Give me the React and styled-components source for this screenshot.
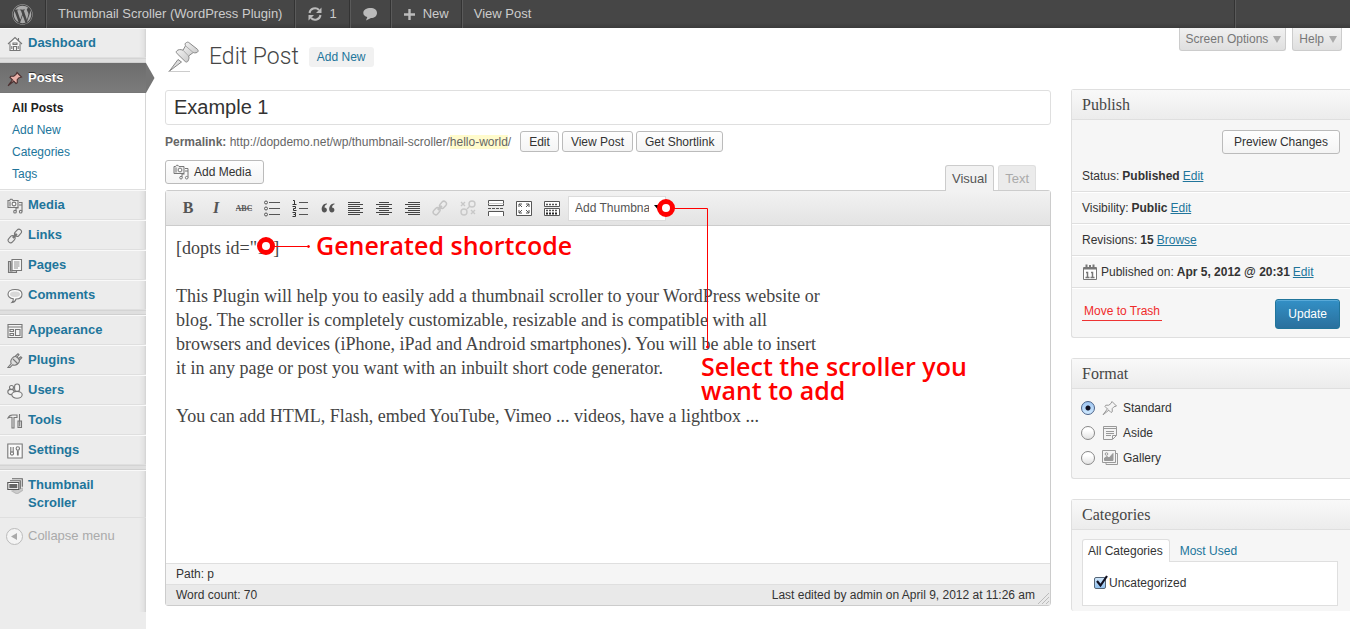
import React from "react";
import styled, { createGlobalStyle, css } from "styled-components";
import { FaWordpress } from "react-icons/fa";

const GlobalStyle = createGlobalStyle`
  *, *::before, *::after { box-sizing: border-box; }
  body { margin: 0; background: #fff; color: #333; font: 12px/18px "Liberation Sans", Arial, sans-serif; }
  button, input, select { font-family: inherit; margin: 0; }
  a { color: #21759b; text-decoration: none; }
  h1, h2, p, ul { margin: 0; padding: 0; }
  ul { list-style: none; }
  svg { display: block; flex: none; }
`;

/* ---------- admin bar ---------- */

const AdminBar = styled.header`
  display: flex;
  height: 28px;
  background: linear-gradient(#464646 0, #464646 23px, #3b3b3b 28px);
`;
const BarItem = styled.a`
  display: flex;
  align-items: center;
  gap: ${(p) => p.$gap || 0}px;
  padding: 0 12px;
  border-right: 1px solid #333;
  box-shadow: 1px 0 #5a5a5a;
  color: #ccc;
  font-size: 13px;
  line-height: 28px;
`;
const BarLast = styled(BarItem)`
  border: 0;
  box-shadow: none;
`;
const BarEnd = styled.div`
  width: 116px;
  margin-left: auto;
  border-left: 1px solid #333;
  box-shadow: inset 1px 0 #5a5a5a;
`;

/* ---------- side menu ---------- */

const Shell = styled.div`
  display: flex;
  min-height: calc(100vh - 28px);
`;
const Side = styled.nav`
  flex: none;
  width: 146px;
  display: flex;
  flex-direction: column;
  padding-bottom: 17px;
  background: #ececec;
`;
const Menu = styled.ul`
  flex: 1;
  position: relative;
  background: linear-gradient(to left, #d2d2d2 0, #e2e2e2 2px, #ececec 7px);
`;
const MenuLink = styled.a`
  position: relative;
  display: flex;
  gap: 5px;
  padding: 5px 10px 5px 7px;
  border-top: 1px solid #f9f9f9;
  border-bottom: 1px solid #dfdfdf;
  font-size: 13px;
  font-weight: bold;
  ${(p) =>
    p.$active &&
    css`
      color: #fff;
      background: linear-gradient(#6d6d6d, #7b7b7b);
      border-color: #6d6d6d #fff #777 #fff;
      border-left: 0;
      border-right: 0;
      text-shadow: 0 -1px 0 #333;
    `}
`;
const MenuIcon = styled.svg`
  width: 16px;
  height: 16px;
  margin-top: 2px;
  fill: none;
  stroke: #777;
  stroke-width: 1.1;
`;
const ActiveArrow = styled.svg`
  position: absolute;
  left: 100%;
  top: -1px;
`;
const Separator = styled.li`
  height: 5px;
  background: #dfdfdf;
  border-top: 1px solid #d4d4d4;
  border-bottom: 1px solid #d0d0d0;
`;
const SubMenu = styled.ul`
  margin-right: 1px;
  padding: 4px 0 4px 12px;
  background: #fff;
  border-bottom: 1px solid #dfdfdf;
  line-height: 22px;
`;
const SubLink = styled.a`
  color: ${(p) => (p.$current ? "#222" : "#21759b")};
  font-weight: ${(p) => (p.$current ? "bold" : "normal")};
`;
const Collapse = styled.button`
  display: flex;
  align-items: center;
  gap: 5px;
  padding: 9px 6px;
  border: 0;
  background: none;
  color: #aaa;
  font-size: 13px;
  line-height: 18px;
`;

/* ---------- page ---------- */

const Page = styled.main`
  flex: 1;
  min-width: 0;
  padding: 0 0 18px 19px;
`;
const PageHead = styled.div`
  display: flex;
  justify-content: space-between;
  align-items: flex-start;
  height: 61px;
`;
const Heading = styled.div`
  display: flex;
  align-items: center;
  padding-top: 11px;
`;
const Title = styled.h1`
  margin: 0 10px 0 8px;
  font: 300 23px/34px Roboto, "Liberation Sans", sans-serif;
  color: #464646;
`;
const AddNew = styled.a`
  padding: 1px 8px;
  border-radius: 3px;
  background: #f1f1f1;
`;
const ScreenTabs = styled.div`
  display: flex;
  gap: 6px;
  padding-right: 8px;
`;
const ScreenTab = styled.button`
  display: flex;
  align-items: center;
  gap: 5px;
  height: 23px;
  padding: 0 4px 0 6px;
  border: 1px solid #ccc;
  border-top: 0;
  border-radius: 0 0 3px 3px;
  background: linear-gradient(#f1f1f1, #dfdfdf);
  color: #777;
  font-size: 12px;
`;
const Columns = styled.div`
  display: flex;
  gap: 20px;
  align-items: flex-start;
`;
const PostColumn = styled.div`
  flex: 1;
  min-width: 0;
`;
const TitleInput = styled.input`
  display: block;
  width: 100%;
  height: 35px;
  margin-top: 1px;
  padding: 0 8px;
  border: 1px solid #dfdfdf;
  border-radius: 3px;
  color: #333;
  font-size: 20px;
`;
const Permalink = styled.div`
  display: flex;
  align-items: center;
  gap: 3px;
  margin: 6px 0 8px;
  color: #666;
  mark { background: #fffbcc; color: inherit; }
  span { padding-right: 6px; }
`;
const Button = styled.button`
  display: flex;
  align-items: center;
  gap: 5px;
  height: ${(p) => (p.$small ? 21 : 24)}px;
  padding: 0 ${(p) => p.$pad || 8}px;
  border: 1px solid #bbb;
  border-radius: 3px;
  background: linear-gradient(#fefefe, #f4f4f4);
  color: #333;
  font-size: 12px;
  white-space: nowrap;
`;
const MediaButton = styled(Button)`
  min-width: 99px;
`;
const EditorHead = styled.div`
  display: flex;
  justify-content: space-between;
  align-items: flex-start;
  height: 30px;
  padding-right: 15px;
`;
const EditorTabs = styled.div`
  display: flex;
  gap: 4px;
  padding-top: 5px;
`;
const EditorTab = styled.button`
  position: relative;
  z-index: 1;
  height: ${(p) => (p.$active ? 26 : 25)}px;
  padding: 0 6px;
  border: 1px solid ${(p) => (p.$active ? "#ccc" : "#dfdfdf")};
  border-bottom: 0;
  border-radius: 3px 3px 0 0;
  background: ${(p) => (p.$active ? "#f2f2f2" : "#ebebeb")};
  color: ${(p) => (p.$active ? "#555" : "#aaa")};
  font-size: 13px;
`;
const Editor = styled.section`
  position: relative;
  border: 1px solid #ccc;
  border-radius: 3px;
`;
const Toolbar = styled.div`
  display: flex;
  align-items: center;
  gap: 8px;
  height: 35px;
  padding-left: 12px;
  border-bottom: 1px solid #ccc;
  background: linear-gradient(#f2f2f2, #e3e3e3);
`;
const Tool = styled.button`
  display: flex;
  align-items: center;
  justify-content: center;
  width: 20px;
  height: 20px;
  padding: 0;
  border: 0;
  background: none;
  svg { width: 18px; height: 18px; fill: none; stroke: #555; }
`;
const SelectWrap = styled.div`
  display: flex;
  align-items: center;
  width: 98px;
  height: 25px;
  margin-left: -2px;
  padding-left: 6px;
  border: 1px solid #dcdcdc;
  background: #fff;
`;
const ToolSelect = styled.select`
  appearance: none;
  width: 74px;
  padding: 0;
  border: 0;
  background: none;
  color: #555;
  font-size: 12px;
`;
const Writing = styled.div`
  min-height: 337px;
  padding: 10px;
  color: #444;
  font: 18px/24px "Liberation Serif", "Times New Roman", serif;
  p { max-width: 650px; margin-bottom: 24px; }
`;
const StatusBar = styled.div`
  display: flex;
  justify-content: space-between;
  height: 21px;
  padding: 0 15px 0 10px;
  border-top: 1px solid #dfdfdf;
  background: ${(p) => (p.$dark ? "#e9e9e9" : "#f5f5f5")};
  line-height: 20px;
  position: relative;
`;
const Grip = styled.svg`
  position: absolute;
  right: 0;
  bottom: 0;
`;
const Callout = styled.svg`
  position: absolute;
  left: 0;
  top: 0;
  pointer-events: none;
`;
const CalloutText = styled.div`
  position: absolute;
  left: ${(p) => p.$left}px;
  top: ${(p) => p.$top}px;
  max-width: 300px;
  color: #f00;
  font: 600 25px/24px "Open Sans", "Noto Sans", sans-serif;
`;

/* ---------- meta boxes ---------- */

const MetaColumn = styled.div`
  flex: none;
  width: 279px;
  display: flex;
  flex-direction: column;
  gap: 20px;
`;
const Box = styled.section`
  border: 1px solid #dfdfdf;
  border-right: 0;
  border-bottom-width: ${(p) => (p.$open ? 0 : 1)}px;
  border-radius: 3px 0 0 3px;
  background: #f6f6f6;
`;
const BoxTitle = styled.h2`
  height: 30px;
  padding: 0 10px;
  border-bottom: 1px solid #dfdfdf;
  background: linear-gradient(#f9f9f9, #ececec);
  color: #464646;
  font: 16px/29px "Liberation Serif", "Times New Roman", serif;
`;
const PreviewRow = styled.div`
  display: flex;
  justify-content: flex-end;
  padding: 10px 10px 6px;
`;
const MetaRow = styled.div`
  display: flex;
  align-items: center;
  gap: 3px;
  height: 32px;
  padding-left: 10px;
  border-bottom: 1px solid #dfdfdf;
  box-shadow: 0 1px #fff;
  a { text-decoration: underline; }
`;
const Actions = styled.div`
  display: flex;
  justify-content: space-between;
  align-items: center;
  padding: 11px 10px 8px;
`;
const Trash = styled.a`
  padding: 0 2px;
  margin-bottom: 4px;
  border-bottom: 1px solid #e33;
  color: #f02a2a;
  line-height: 17px;
`;
const Update = styled.button`
  height: 30px;
  padding: 0 12px;
  border: 1px solid #21759b;
  border-radius: 3px;
  background: linear-gradient(#3390c6, #2a709d);
  box-shadow: inset 0 1px #59aad8;
  color: #fff;
  font-size: 12px;
`;
const FormatList = styled.div`
  display: flex;
  flex-direction: column;
  gap: 7px;
  padding: 10px 9px 11px;
`;
const FormatOption = styled.label`
  display: flex;
  align-items: center;
  gap: 5px;
`;
const Radio = styled.input`
  appearance: none;
  width: 14px;
  height: 14px;
  margin-right: 2px;
  border: 1px solid #888;
  border-radius: 50%;
  background: linear-gradient(#fff 30%, #e2e2e2);
  &:checked {
    border-color: #4a6288;
    background: radial-gradient(circle, #112 0 2px, transparent 3px), linear-gradient(#9fc6f2, #cfe9ff);
  }
`;
const CatBody = styled.div`
  padding: 9px 12px 5px 10px;
`;
const CatTabs = styled.div`
  display: flex;
`;
const CatTab = styled.button`
  height: 23px;
  margin-bottom: -1px;
  padding: 0 6px 0 5px;
  border: 1px solid ${(p) => (p.$active ? "#dfdfdf" : "transparent")};
  border-bottom: 0;
  border-radius: 3px 3px 0 0;
  background: ${(p) => (p.$active ? "#fff" : "none")};
  color: ${(p) => (p.$active ? "#333" : "#21759b")};
  font-size: 12px;
  & + & { margin-left: 4px; }
`;
const CatPanel = styled.div`
  padding: 12px 11px 13px;
  border: 1px solid #dfdfdf;
  background: #fff;
`;
const CatLabel = styled.label`
  position: relative;
  display: flex;
  align-items: center;
  gap: 3px;
`;
const Check = styled.input`
  appearance: none;
  width: 12px;
  height: 12px;
  border: 1px solid #567;
  border-radius: 2px;
  background: linear-gradient(#cfe6fb, #8fc0ee);
`;
const CheckMark = styled.svg`
  position: absolute;
  left: 1px;
  top: 0;
  pointer-events: none;
`;

/* ---------- drawings ---------- */

const mediaShape = (
  <>
    <path d="M1 2.500h1.500l1-1.200h1.500l1 1.200h5v7h-10zM3 3.500v5" fill="#eee" />
    <circle cx="7" cy="6" r="1.900" fill="#fff" />
    <path d="M12 4.500h3v9M12 7h3M9 13.500v-3.500h2.500" />
    <circle cx="8" cy="13.700" r="1.300" fill="#fff" />
    <circle cx="13.700" cy="13.700" r="1.300" fill="#fff" />
  </>
);
const chainShape = (
  <>
    <rect x="-3.900" y="-2.500" width="7.800" height="5" rx="2.500" transform="translate(11 4.800) rotate(-48)" />
    <rect x="-3.900" y="-2.500" width="7.800" height="5" rx="2.500" transform="translate(4.600 11.200) rotate(-48)" />
    <path d="M5.800 9.900l4-4" strokeWidth="2.400" />
  </>
);
const pinShape = (
  <>
    <path d="M10 1.500l4.500 4.500-1.500.5-1 .2-1.800 2 .1 3-1.300.8-6-6 .8-1.300h3l2.200-1.800z" />
    <path d="M5.600 8.600L1 14.800l6-4.800" />
  </>
);
const shapes = {
  home: (
    <>
      <path d="M1 8l7-6.500L15 8M3 7.500v7h10v-7" fill="#f8f8f8" />
      <path d="M6.500 14.500v-4h3v4M6 7h4v1.500H6zM11.500 2v3M4.800 10v3M11.200 10v3" />
    </>
  ),
  media: mediaShape,
  links: chainShape,
  pages: (
    <>
      <path d="M3.500 3.500h-2v11h8v-2M1.500 5v9M3.500 3v10h2" fill="#ccc" />
      <path d="M5 1.500h9.500v11H5z" fill="#fafafa" />
      <path d="M7 4h5.500M7 6h5.500M7 8h5.500M7 10h4" strokeWidth=".8" />
    </>
  ),
  comments: (
    <>
      <path d="M8 1.500c4 0 7 1.800 7 4.700s-2.500 4.700-6 4.800c-.5 2-1.800 3.200-4 3.500 1-.9 1.400-2 1.300-3.700C3 10.200 1 8.600 1 6.200c0-2.900 3-4.700 7-4.700z" fill="#fafafa" />
      <ellipse cx="8" cy="6.200" rx="5" ry="2.700" fill="#d8d8d8" stroke="none" />
    </>
  ),
  appearance: (
    <>
      <path d="M1 1.500h14v13H1z" fill="#f4f4f4" />
      <path d="M1 4h14M3 6.500h3.500v2H3zM3 10.500h3.500v2H3zM8.500 6.500H13v6H8.500z" />
    </>
  ),
  plugins: (
    <>
      <path d="M5 5.500c2-2.500 4-2.500 6-.5s2 4-.5 6c-1.500 1.300-3.500 1.500-5 .8L3 14.500H1L4.200 10.500C3.500 9 3.800 7 5 5.500z" fill="#ddd" />
      <path d="M8 3.500L11 .8l1 1-2.500 2.700M12 7.500l2.800-2.800-1-1L11 6M6 6l5 5" />
    </>
  ),
  users: (
    <>
      <circle cx="4.500" cy="4.500" r="2" fill="#f4f4f4" />
      <ellipse cx="4" cy="9" rx="3.200" ry="2.600" fill="#f4f4f4" />
      <rect x="7.600" y="1" width="5" height="7.500" rx="2.400" fill="#f4f4f4" />
      <ellipse cx="10" cy="11.800" rx="5.200" ry="3.400" fill="#f4f4f4" />
    </>
  ),
  tools: (
    <>
      <path d="M1 5c1-2.500 3-3 4.500-3H10v2.500H7V15H5V4.500C3.500 4 2 4.500 1 5z" fill="#eee" />
      <path d="M12.500 1v7M11 8h3.500v6.500H11zM12.700 8.500v5" />
    </>
  ),
  settings: (
    <>
      <path d="M.8 1h14.400v14H.8z" fill="#fafafa" />
      <path d="M3.800 4v5M6.200 4v5" />
      <circle cx="5" cy="10.500" r="1.600" />
      <circle cx="10.800" cy="5.500" r="1.700" />
      <path d="M10.800 7.500v5" strokeWidth="1.800" />
    </>
  ),
};

const ThumbIcon = () => (
  <MenuIcon viewBox="0 0 16 16">
    <path d="M5 13l5 3 6-4v-2z" fill="#ccc" stroke="#bbb" />
    <path d="M5 .8h10.300v8M3 2.800h10.300v8" stroke="#666" />
    <path d="M.8 4.500h11v7h-11z" fill="#fff" stroke="#555" />
    <path d="M2.300 6h8v4.200h-8z" fill="#666" stroke="none" />
  </MenuIcon>
);

const HeadPin = () => (
  <svg width="36" height="36" viewBox="0 0 36 36">
    <defs>
      <linearGradient id="pin" x1="0" y1="0" x2="1" y2="1">
        <stop offset="0" stopColor="#fff" />
        <stop offset="1" stopColor="#bbb" />
      </linearGradient>
    </defs>
    <path d="M3 32.500h22" stroke="#ccc" />
    <path d="M13 20.500L4.500 32 16.500 23z" fill="#ddd" stroke="#888" />
    <path
      d="M21.500 3.500c-1.500.6-1.700 1.800-1 3.300l-2.500 4.400c-2.400-1-5-.8-6.300.8-.9.8-.3 2 .5 2.700l7.800 7.600c1 1 2.200 1 2.800 0 1.300-2 1.500-4 .8-5.300l4.600-3.500c1.800.8 4.300.3 4.900-1.200.2-1-.3-1.700-1-2.300L24 3.700c-.8-.7-1.600-.7-2.500-.2z"
      fill="url(#pin)"
      stroke="#888"
    />
    <path d="M20.500 6.800l7.700 6.700M18 11.200l5.600 5.800" stroke="#aaa" fill="none" />
  </svg>
);

const Glyph = ({ x = 9, y = 14, size, children, ...rest }) => (
  <text x={x} y={y} fontSize={size} textAnchor="middle" fill="#555" stroke="none" fontFamily="Liberation Serif, serif" fontWeight="bold" {...rest}>
    {children}
  </text>
);

const tools = [
  ["Bold", <Glyph size="16">B</Glyph>],
  ["Italic", <Glyph size="16" fontStyle="italic">I</Glyph>],
  ["Strikethrough", <><Glyph size="8" y="12">ABC</Glyph><path d="M1 9.500h16" strokeWidth=".8" /></>],
  ["Bulleted list", <><path d="M6 3.500h11M6 9.500h11M6 15.500h11" /><circle cx="3" cy="3.500" r="1.500" /><circle cx="3" cy="9.500" r="1.500" /><circle cx="3" cy="15.500" r="1.500" /></>],
  ["Numbered list", <><path d="M8 3.500h9M8 9.500h9M8 15.500h9" /><path d="M2 1.500h1.500v4M1.500 5.500h4M1.500 7.500h3v2h-2v2h3M1.500 13.500h3v2h-2M4.500 15.500v2h-3" stroke="#333" /></>],
  ["Quote", <path d="M8 4.500C5 4 2.500 7 2.700 10.500c.1 2 1.300 3 2.700 3s2.500-1.100 2.500-2.500S7 8.600 5.500 8.600c0-1.500 1-3 2.500-3.400zM15.500 4.500c-3-.5-5.500 2.500-5.300 6 .1 2 1.300 3 2.700 3s2.500-1.100 2.500-2.500-.9-2.400-2.400-2.400c0-1.500 1-3 2.500-3.400z" fill="#555" stroke="none" />],
  ["Align left", <path d="M1 3.500h12M1 5.500h15M1 7.500h12M1 9.500h15M1 11.500h12M1 13.500h15M1 15.500h12" stroke="#444" />],
  ["Align center", <path d="M4 3.500h10M1 5.500h16M4 7.500h10M1 9.500h16M4 11.500h10M1 13.500h16M4 15.500h10" stroke="#444" />],
  ["Align right", <path d="M5 3.500h12M2 5.500h15M5 7.500h12M2 9.500h15M5 11.500h12M2 13.500h15M5 15.500h12" stroke="#444" />],
  ["Insert link", <g stroke="#c4c4c4" strokeWidth="1.400" transform="translate(1 1)">{chainShape}</g>],
  ["Remove link", <g stroke="#c8c8c8" strokeWidth="1.400"><circle cx="13" cy="5" r="3" /><circle cx="5" cy="13" r="3" /><path d="M2 3l4 4M6 3L2 7M12 11l4 4M16 11l-4 4M8 10l3-3" /></g>],
  ["Read more", <><path d="M1.500 6.500v-5h15v5z" fill="#fff" /><path d="M1.500 4.500h15" stroke="#ccc" /><path d="M1 9.500h16" strokeDasharray="3 1" /><path d="M1.500 17v-4.500h15V17" fill="#fff" /></>],
  ["Fullscreen", <><path d="M1.500 2.500h15v14h-15z" fill="#fff" /><path d="M4 8V5h3M4 5l3 3M14 8V5h-3M14 5l-3 3M4 11v3h3M4 14l3-3M14 11v3h-3M14 14l-3-3" /></>],
  ["Kitchen sink", <><path d="M1.500 2.500h15v5h-15zM1.500 9.500h15v7h-15z" fill="#fff" /><path d="M3 5.500h12M3 11.500h12" strokeDasharray="2 1" strokeWidth="1.500" /><path d="M3 14.500h12" strokeDasharray="2 1" strokeWidth="2" stroke="#222" /></>],
];

const MenuEntry = ({ icon, children }) => (
  <li>
    <MenuLink href="#">
      <MenuIcon viewBox="0 0 16 16">{shapes[icon]}</MenuIcon>
      {children}
    </MenuLink>
  </li>
);

const FormatIcon = ({ kind }) => (
  <svg width="16" height="16" viewBox="0 0 16 16" fill="#f4f4f4" stroke="#999">
    {kind === "Standard" && pinShape}
    {kind === "Aside" && (
      <>
        <path d="M1.500 1.500h13v9l-4 4h-9zM10.500 14v-3.500h4" />
        <path d="M1.500 3.500h13M4 6.500h8M4 8.500h8M4 10.500h5" />
      </>
    )}
    {kind === "Gallery" && (
      <>
        <path d="M4 13v1.500h11.500v-11H14" />
        <path d="M.5 .5h13v12H.5z" />
        <path d="M2.500 10.500V8L5 6.500l2 1.500 4-4.500v7z" fill="#999" />
        <circle cx="4.500" cy="4" r="1.300" />
      </>
    )}
  </svg>
);

const Triangle = () => (
  <svg width="8" height="7"><path d="M0 0h8L4 7z" fill="#aaa" /></svg>
);

export default function App() {
  return (
    <>
      <GlobalStyle />
      <AdminBar>
        <BarItem href="#" aria-label="WordPress"><FaWordpress size={21} color="#aaa" /></BarItem>
        <BarItem href="#">Thumbnail Scroller (WordPress Plugin)</BarItem>
        <BarItem href="#" $gap={6}>
          <svg width="16" height="16" viewBox="0 0 16 16" fill="none" stroke="#bbb" strokeWidth="2">
            <path d="M2.500 7A5.500 5.500 0 0 1 12 4M13.500 9A5.500 5.500 0 0 1 4 12" />
            <path d="M14.500 1.500v5.500H9zM1.500 14.500V9H7z" fill="#bbb" stroke="none" />
          </svg>
          1
        </BarItem>
        <BarItem href="#" aria-label="Comments">
          <svg width="16" height="16" viewBox="0 0 16 16">
            <path d="M8.500 2c3.800 0 6.500 1.900 6.500 4.900S12.300 12 9 12L4 14.500 5.300 11C3 10.200 1.300 9 1.300 6.900 1.300 3.900 4.700 2 8.500 2z" fill="#bbb" />
          </svg>
        </BarItem>
        <BarItem href="#" $gap={7}>
          <svg width="13" height="13" viewBox="0 0 13 13"><path d="M6.500 1v11M1 6.500h11" stroke="#bbb" strokeWidth="2.400" /></svg>
          New
        </BarItem>
        <BarLast href="#">View Post</BarLast>
        <BarEnd />
      </AdminBar>

      <Shell>
        <Side>
          <Menu>
            <MenuEntry icon="home">Dashboard</MenuEntry>
            <Separator />
            <li>
              <MenuLink href="#" $active>
                <MenuIcon viewBox="0 0 16 16"><g fill="#e8b0a8" stroke="#4a3030">{pinShape}</g></MenuIcon>
                Posts
                <ActiveArrow width="9" height="30"><path d="M0 0l8.500 15L0 30z" fill="#757575" /></ActiveArrow>
              </MenuLink>
              <SubMenu>
                <li><SubLink href="#" $current>All Posts</SubLink></li>
                <li><SubLink href="#">Add New</SubLink></li>
                <li><SubLink href="#">Categories</SubLink></li>
                <li><SubLink href="#">Tags</SubLink></li>
              </SubMenu>
            </li>
            <MenuEntry icon="media">Media</MenuEntry>
            <MenuEntry icon="links">Links</MenuEntry>
            <MenuEntry icon="pages">Pages</MenuEntry>
            <MenuEntry icon="comments">Comments</MenuEntry>
            <Separator />
            <MenuEntry icon="appearance">Appearance</MenuEntry>
            <MenuEntry icon="plugins">Plugins</MenuEntry>
            <MenuEntry icon="users">Users</MenuEntry>
            <MenuEntry icon="tools">Tools</MenuEntry>
            <MenuEntry icon="settings">Settings</MenuEntry>
            <Separator />
            <li><MenuLink href="#"><ThumbIcon />Thumbnail Scroller</MenuLink></li>
            <li>
              <Collapse>
                <svg width="17" height="17" viewBox="0 0 17 17">
                  <circle cx="8.500" cy="8.500" r="8" fill="#f4f4f4" stroke="#bbb" />
                  <path d="M11 5v7L5 8.500z" fill="#aaa" />
                </svg>
                Collapse menu
              </Collapse>
            </li>
          </Menu>
        </Side>

        <Page>
          <PageHead>
            <Heading>
              <HeadPin />
              <Title>Edit Post</Title>
              <AddNew href="#">Add New</AddNew>
            </Heading>
            <ScreenTabs>
              <ScreenTab>Screen Options <Triangle /></ScreenTab>
              <ScreenTab>Help <Triangle /></ScreenTab>
            </ScreenTabs>
          </PageHead>

          <Columns>
            <PostColumn>
              <TitleInput aria-label="Post title" defaultValue="Example 1" />
              <Permalink>
                <span><b>Permalink:</b> http://dopdemo.net/wp/thumbnail-scroller/<mark>hello-world</mark>/</span>
                <Button $small>Edit</Button>
                <Button $small>View Post</Button>
                <Button $small>Get Shortlink</Button>
              </Permalink>
              <EditorHead>
                <MediaButton $pad={7}>
                  <svg width="16" height="16" viewBox="0 0 16 16" fill="none" stroke="#777">{mediaShape}</svg>
                  Add Media
                </MediaButton>
                <EditorTabs>
                  <EditorTab $active>Visual</EditorTab>
                  <EditorTab>Text</EditorTab>
                </EditorTabs>
              </EditorHead>
              <Editor>
                <Toolbar>
                  {tools.map(([name, drawing]) => (
                    <Tool key={name} aria-label={name}><svg viewBox="0 0 18 18">{drawing}</svg></Tool>
                  ))}
                  <SelectWrap>
                    <ToolSelect aria-label="Add Thumbnail Scroller">
                      <option>Add Thumbnail Scroller</option>
                    </ToolSelect>
                    <svg width="14" height="6"><path d="M5 0h9l-4 6z" fill="#000" /></svg>
                  </SelectWrap>
                </Toolbar>
                <Writing>
                  <p>[dopts id="1"]</p>
                  <p>
                    This Plugin will help you to easily add a thumbnail scroller to your WordPress website or blog. The
                    scroller is completely customizable, resizable and is compatible with all browsers and devices
                    (iPhone, iPad and Android smartphones). You will be able to insert it in any page or post you want
                    with an inbuilt short code generator.
                  </p>
                  <p>You can add HTML, Flash, embed YouTube, Vimeo ... videos, have a lightbox ...</p>
                </Writing>
                <StatusBar>Path: p</StatusBar>
                <StatusBar $dark>
                  <span>Word count: 70</span>
                  <span>Last edited by admin on April 9, 2012 at 11:26 am</span>
                  <Grip width="13" height="13"><path d="M1 12L12 1M5 12l7-7M9 12l3-3" stroke="#bbb" /></Grip>
                </StatusBar>
                <Callout width="560" height="170" fill="none" stroke="#f00">
                  <circle cx="100" cy="55" r="6.500" strokeWidth="5" fill="#fff" />
                  <path d="M108 55.500h34" />
                  <circle cx="142.500" cy="55.500" r="1" fill="#f00" />
                  <circle cx="500" cy="17" r="6.500" strokeWidth="5" fill="#fff" />
                  <path d="M508 17.500h33.500v139" />
                  <circle cx="541.500" cy="156" r="1" fill="#f00" />
                </Callout>
                <CalloutText $left={150} $top={42}>Generated shortcode</CalloutText>
                <CalloutText $left={535} $top={163}>Select the scroller you want to add</CalloutText>
              </Editor>
            </PostColumn>

            <MetaColumn>
              <Box>
                <BoxTitle>Publish</BoxTitle>
                <PreviewRow><Button $pad={11}>Preview Changes</Button></PreviewRow>
                <MetaRow>Status: <b>Published</b> <a href="#">Edit</a></MetaRow>
                <MetaRow>Visibility: <b>Public</b> <a href="#">Edit</a></MetaRow>
                <MetaRow>Revisions: <b>15</b> <a href="#">Browse</a></MetaRow>
                <MetaRow>
                  <svg width="16" height="16" viewBox="0 0 16 16" fill="none" stroke="#777">
                    <path d="M1.500 3.500h13v12h-13z" fill="#fff" />
                    <path d="M2 4.500h12" strokeWidth="2" />
                    <path d="M4.500 .5v3M11.500 .5v3M8 1v2" strokeWidth="2" />
                    <path d="M4 8.500h1.500v5M3.500 13.500h4M9 8.500h1.500v5M8.500 13.500h4" strokeWidth="1.500" />
                  </svg>
                  Published on: <b>Apr 5, 2012 @ 20:31</b> <a href="#">Edit</a>
                </MetaRow>
                <Actions><Trash href="#">Move to Trash</Trash><Update>Update</Update></Actions>
              </Box>

              <Box>
                <BoxTitle>Format</BoxTitle>
                <FormatList>
                  {["Standard", "Aside", "Gallery"].map((kind, i) => (
                    <FormatOption key={kind}>
                      <Radio type="radio" name="format" defaultChecked={i === 0} />
                      <FormatIcon kind={kind} />
                      {kind}
                    </FormatOption>
                  ))}
                </FormatList>
              </Box>

              <Box $open>
                <BoxTitle>Categories</BoxTitle>
                <CatBody>
                  <CatTabs>
                    <CatTab $active>All Categories</CatTab>
                    <CatTab>Most Used</CatTab>
                  </CatTabs>
                  <CatPanel>
                    <CatLabel>
                      <Check type="checkbox" defaultChecked />
                      <CheckMark width="13" height="14"><path d="M2 7l3.500 4.500L12 2" fill="none" stroke="#112" strokeWidth="2.200" /></CheckMark>
                      Uncategorized
                    </CatLabel>
                  </CatPanel>
                </CatBody>
              </Box>
            </MetaColumn>
          </Columns>
        </Page>
      </Shell>
    </>
  );
}
